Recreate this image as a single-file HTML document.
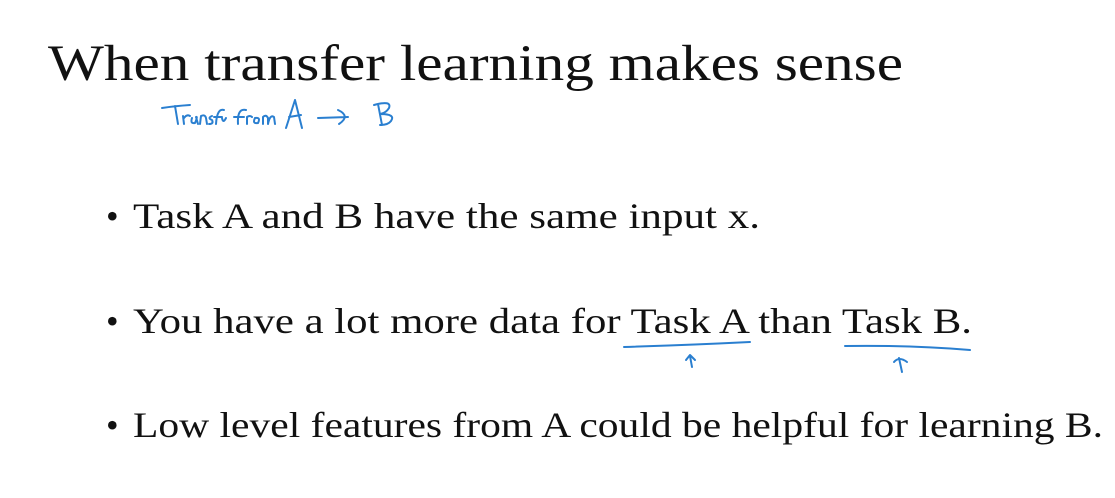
<!DOCTYPE html>
<html><head><meta charset="utf-8"><style>
html,body{margin:0;padding:0;background:#fff;}
svg{display:block}
</style></head><body>
<svg width="1115" height="498" viewBox="0 0 1115 498" xmlns="http://www.w3.org/2000/svg">
<rect width="1115" height="498" fill="#fff"/>
<g font-family="'Liberation Serif', serif" fill="#111">
<text x="48" y="80" font-size="51" textLength="855" lengthAdjust="spacingAndGlyphs">When transfer learning makes sense</text>
<text x="106" y="228" font-size="36">•</text>
<text x="133" y="228" font-size="36" textLength="627" lengthAdjust="spacingAndGlyphs">Task A and B have the same input x.</text>
<text x="106" y="333" font-size="36">•</text>
<text x="133" y="333" font-size="36" textLength="839" lengthAdjust="spacingAndGlyphs">You have a lot more data for Task A than Task B.</text>
<text x="106" y="437" font-size="36">•</text>
<text x="133" y="437" font-size="36" textLength="970" lengthAdjust="spacingAndGlyphs">Low level features from A could be helpful for learning B.</text>
</g>
<g fill="none" stroke="#2a7fd0" stroke-width="2" stroke-linecap="round" stroke-linejoin="round">
<path d="M162 108 Q175 106 190 105 M175 106 L178 124"/>
<path d="M183 116 L184 124 M184 118 Q187 114 190 116 M192 118 Q190 124 195 123 Q198 116 196 117 L198 124 M200 124 L201 116 Q205 114 206 118 L207 124 M212 116 Q207 118 212 120 Q214 124 209 124 M216 124 Q217 108 224 110 M214 117 L222 117 M222 118 Q223 124 226 118"/>
<path d="M238 124 Q237 108 246 110 M234 117 L244 117 M247 124 L247 117 Q250 115 252 117 M255 118 Q252 124 258 123 Q261 117 255 118 M263 124 L263 117 Q266 114 268 118 L268 124 Q270 114 274 117 L275 124"/>
<path d="M286 128 L295 100 L302 128 M289 117 L301 115"/>
<path d="M318 118 L348 117 M338 110 Q351 116 339 124"/>
<path d="M378 104 L382 125 M374 105 Q392 100 389 108 Q386 113 380 114 Q396 114 391 121 Q388 125 380 125"/>
<path d="M624 347 Q690 345 750 342"/>
<path d="M845 346 Q910 345 970 350"/>
<path d="M692 367 L690 356 M686 360 L690 355 L695 360"/>
<path d="M902 372 L899 358 M894 362 Q899 356 907 362"/>
</g>
</svg>
</body></html>
